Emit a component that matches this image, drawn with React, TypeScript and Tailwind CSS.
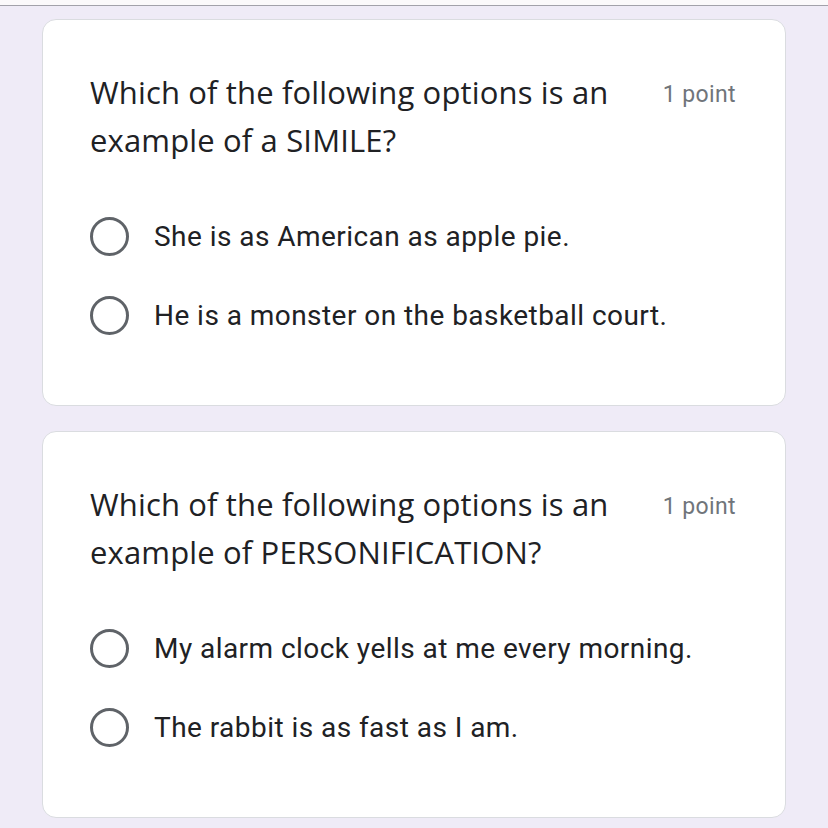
import React from "react";

function Radio() {
  return <div className="w-[39px] h-[39px] rounded-full border-[3px] border-[#5f6368] shrink-0" />;
}

function Card({ q1, q2, opts }: { q1: string; q2: string; opts: string[] }) {
  return (
    <div className="bg-white rounded-[14px] border border-[#dadce0] pt-[48px] pb-[50px] pl-[47px] pr-[49px]">
      <div className="flex justify-between items-start">
        <div
          className="text-[31px] leading-[48px] text-[#202124] tracking-[0.15px]"
          style={{ fontFamily: '"Open Sans", sans-serif' }}
        >
          <div>{q1}</div>
          <div>{q2}</div>
        </div>
        <div
          className="text-[23px] leading-[48px] text-[#70757a] pt-[3px] tracking-[0.4px]"
          style={{ fontFamily: 'Roboto, sans-serif' }}
        >
          1 point
        </div>
      </div>
      <div className="mt-[33px] flex flex-col">
        {opts.map((o) => (
          <div key={o} className="h-[79px] flex items-center gap-[25px]">
            <Radio />
            <span
              className="text-[28px] text-[#202124] tracking-[0.45px]"
              style={{ fontFamily: 'Roboto, sans-serif' }}
            >
              {o}
            </span>
          </div>
        ))}
      </div>
    </div>
  );
}

export default function App() {
  return (
    <div className="w-[828px] h-[828px] bg-[#efebf7] overflow-hidden">
      <div className="h-[6px] bg-[#fbf9fb] border-b border-[#a2a1aa]" />
      <div className="px-[42px] pt-[13px] flex flex-col gap-[25px]">
        <Card
          q1="Which of the following options is an"
          q2="example of a SIMILE?"
          opts={["She is as American as apple pie.", "He is a monster on the basketball court."]}
        />
        <Card
          q1="Which of the following options is an"
          q2="example of PERSONIFICATION?"
          opts={["My alarm clock yells at me every morning.", "The rabbit is as fast as I am."]}
        />
      </div>
    </div>
  );
}
